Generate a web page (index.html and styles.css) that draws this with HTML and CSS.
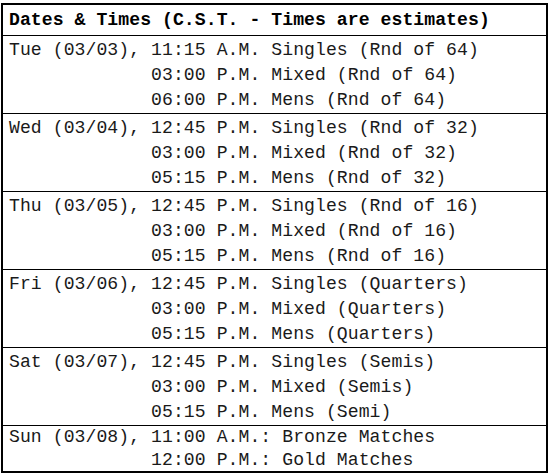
FILE: index.html
```html
<!DOCTYPE html>
<html>
<head>
<meta charset="utf-8">
<link rel="stylesheet" href="styles.css">
</head>
<body>
<div class="schedule">
  <div class="head">Dates &amp; Times (C.S.T. - Times are estimates)</div>
  <pre class="day">Tue (03/03), 11:15 A.M. Singles (Rnd of 64)
             03:00 P.M. Mixed (Rnd of 64)
             06:00 P.M. Mens (Rnd of 64)</pre>
  <pre class="day">Wed (03/04), 12:45 P.M. Singles (Rnd of 32)
             03:00 P.M. Mixed (Rnd of 32)
             05:15 P.M. Mens (Rnd of 32)</pre>
  <pre class="day">Thu (03/05), 12:45 P.M. Singles (Rnd of 16)
             03:00 P.M. Mixed (Rnd of 16)
             05:15 P.M. Mens (Rnd of 16)</pre>
  <pre class="day">Fri (03/06), 12:45 P.M. Singles (Quarters)
             03:00 P.M. Mixed (Quarters)
             05:15 P.M. Mens (Quarters)</pre>
  <pre class="day">Sat (03/07), 12:45 P.M. Singles (Semis)
             03:00 P.M. Mixed (Semis)
             05:15 P.M. Mens (Semi)</pre>
  <pre class="day last">Sun (03/08), 11:00 A.M.: Bronze Matches
             12:00 P.M.: Gold Matches</pre>
</div>
</body>
</html>
```

FILE: styles.css
```css
html, body {
  margin: 0;
  padding: 0;
  background: #fff;
}
body {
  padding: 3px 0 0 1px;
}
.schedule {
  width: 543px;
  border: 2px solid #000;
  font-family: "Courier New", "Liberation Mono", monospace;
  font-size: 18.1px;
  letter-spacing: 0.07px;
  color: #1a1a1a;
}
.head {
  font-weight: bold;
  color: #000;
  height: 30px;
  line-height: 30px;
  padding-left: 6px;
  border-bottom: 1px solid #000;
  white-space: pre;
}
.day {
  margin: 0;
  font-family: inherit;
  font-size: inherit;
  line-height: 25px;
  padding: 2px 0 0 6px;
  border-bottom: 1px solid #000;
}
.day.last {
  line-height: 22.5px;
  padding: 0 0 0 6px;
  border-bottom: none;
}
```
